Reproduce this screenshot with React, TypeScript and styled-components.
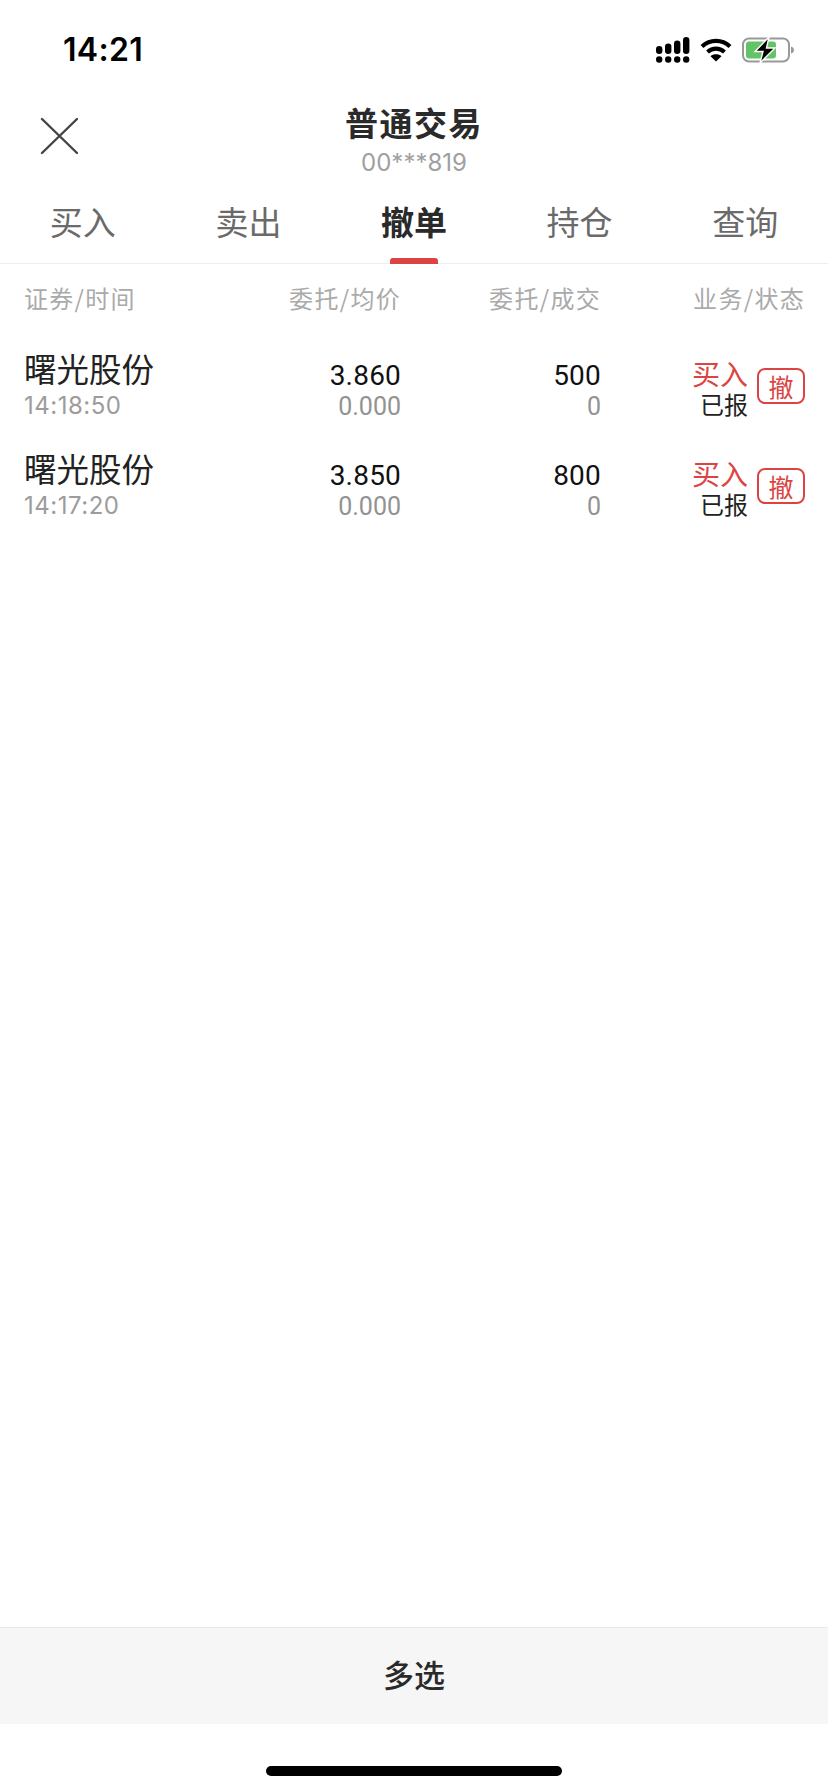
import React from "react";
import styled, { createGlobalStyle } from "styled-components";

const Global = createGlobalStyle`
  html, body { margin: 0; padding: 0; background: #fff; }
  body { font-family: "Inter", "Noto Sans CJK SC", sans-serif; }
`;
const CJK = `"Noto Sans CJK SC", sans-serif`;

const Page = styled.div`
  width: 828px; height: 1792px; display: flex; flex-direction: column; overflow: hidden; background: #fff;
`;
const StatusBar = styled.div`
  height: 100px; flex: none; display: flex; justify-content: space-between; align-items: center; padding: 0 32px 0 63px; box-sizing: border-box;
`;
const Time = styled.span`
  font: 600 32px/36px "Inter", sans-serif; color: #000; letter-spacing: 0.3px;
`;
const StatusIcons = styled.div`
  display: flex; align-items: center; gap: 10px;
`;
const Header = styled.div`
  height: 76px; flex: none; display: flex; flex-direction: column; align-items: center; position: relative;
`;
const Close = styled.svg`
  position: absolute; left: 40px; top: 17px;
`;
const Title = styled.div`
  font: 700 33px/44px ${CJK}; color: #2a2a2a; letter-spacing: 1.5px;
`;
const Account = styled.div`
  font: 400 24px/26px "Inter", sans-serif; color: #a0a0a0; margin-top: 6px;
`;
const Tabs = styled.div`
  height: 88px; flex: none; display: grid; grid-template-columns: repeat(5, 1fr); border-bottom: 1px solid #eee; box-sizing: border-box;
`;
const Tab = styled.div<{ $active?: boolean }>`
  position: relative; display: flex; justify-content: center; padding-top: 23px;
  font: ${p => (p.$active ? 700 : 400)} 33px/44px ${CJK}; color: ${p => (p.$active ? "#2a2a2a" : "#6a6a6a")};
`;
const Indicator = styled.span`
  position: absolute; left: 50%; bottom: -1px; width: 48px; height: 6px; margin-left: -24px; background: #dc4444; border-radius: 3px 3px 0 0;
`;
const Grid = styled.div`
  display: grid; grid-template-columns: 1fr 200px 200px 204px; padding: 0 23px 0 24px;
`;
const HeadRow = styled(Grid)`
  height: 68px; align-items: center; flex: none;
`;
const HeadCell = styled.div<{ $left?: boolean }>`
  font: 400 24px/32px ${CJK}; color: #aaa; text-align: ${p => (p.$left ? "left" : "right")}; letter-spacing: 1.3px;
`;
const Row = styled(Grid)`
  height: 100px; flex: none; align-items: start;
`;
const NameCell = styled.div`
  display: flex; flex-direction: column; padding-top: 16px;
`;
const Name = styled.div`
  font: 400 32.5px/40px ${CJK}; color: #222;
`;
const Clock = styled.div`
  font: 400 24px/28px "Inter", sans-serif; color: #9c9c9c; margin-top: 4px; letter-spacing: 0.5px;
`;
const ValueCell = styled.div`
  display: flex; flex-direction: column; align-items: flex-end; padding-top: 28px;
`;
const Main = styled.div`
  font: 400 28px/32px "Roboto", sans-serif; color: #111; letter-spacing: 0.2px;
`;
const Sub = styled.div`
  font: 400 25px/28px "Roboto", sans-serif; color: #929292; margin-top: 1px;
`;
const StatusCell = styled.div`
  display: flex; justify-content: flex-end; align-items: flex-start; gap: 9px; padding-top: 25px;
`;
const StatusText = styled.div`
  display: flex; flex-direction: column; align-items: flex-end;
`;
const Kind = styled.div`
  font: 400 28px/32px ${CJK}; color: #dc4444;
`;
const State = styled.div`
  font: 400 24px/30px ${CJK}; color: #222;
`;
const Cancel = styled.div`
  width: 48px; height: 36px; box-sizing: border-box; border: 2px solid #dc4444; border-radius: 8px; display: flex; align-items: center; justify-content: center;
  font: 400 25px/32px ${CJK}; color: #dc4444; margin-top: 11px;
`;
const Spacer = styled.div` flex: 1; `;
const Footer = styled.div`
  height: 97px; flex: none; box-sizing: border-box; border-top: 1px solid #e9e9e9; background: #f6f6f6; display: flex; align-items: center; justify-content: center; padding-bottom: 4px;
  font: 500 31px/40px ${CJK}; color: #2a2a2a;
`;
const HomeArea = styled.div`
  height: 68px; flex: none; display: flex; justify-content: center; padding-top: 42px; box-sizing: border-box;
`;
const HomeBar = styled.div`
  width: 296px; height: 10px; border-radius: 5px; background: #000;
`;

const Signal = () => (
  <svg width="34" height="26" viewBox="0 0 34 26">
    {[0, 9, 18, 27].map(x => <circle key={x} cx={x + 3.2} cy="22.5" r="3.2" fill="#000" />)}
    <rect x="0" y="9" width="6.4" height="8" rx="3.2" fill="#000" />
    <rect x="9" y="6.5" width="6.4" height="10.5" rx="3.2" fill="#000" />
    <rect x="18" y="3.5" width="6.4" height="13.5" rx="3.2" fill="#000" />
    <rect x="27" y="0" width="6.4" height="17" rx="3.2" fill="#000" />
  </svg>
);
const Wifi = () => (
  <svg width="32" height="24" viewBox="0 0 32 24" fill="none" stroke="#000" strokeWidth="4.2">
    <path d="M2 8.5C10 1 22 1 30 8.5" />
    <path d="M7.5 14C12.5 9.5 19.5 9.5 24.5 14" />
    <path d="M16 23.5L10.5 18.2C13.5 15.6 18.5 15.6 21.5 18.2Z" fill="#000" stroke="none" />
  </svg>
);
const Battery = () => (
  <svg width="54" height="26" viewBox="0 0 54 26">
    <rect x="1" y="1.5" width="46" height="23" rx="6" fill="none" stroke="#999" strokeWidth="2" />
    <rect x="4" y="4.5" width="30" height="17" rx="3" fill="#63c466" />
    <path d="M49 9.5C51 10 52 11.5 52 13C52 14.5 51 16 49 16.5Z" fill="#999" />
    <path d="M27 0L13 14.5H21L18 26L33 11H24.5Z" fill="#000" stroke="#fff" strokeWidth="1.4" />
  </svg>
);

const orders = [
  { time: "14:18:50", price: "3.860", qty: "500" },
  { time: "14:17:20", price: "3.850", qty: "800" },
];

export default function App() {
  return (
    <Page>
      <Global />
      <StatusBar>
        <Time>14:21</Time>
        <StatusIcons>
          <Signal />
          <Wifi />
          <Battery />
        </StatusIcons>
      </StatusBar>
      <Header>
        <Close width="38" height="38" viewBox="0 0 38 38" stroke="#444" strokeWidth="2.4" strokeLinecap="round">
          <path d="M2 2L37 36M37 2L2 36" />
        </Close>
        <Title>普通交易</Title>
        <Account>00***819</Account>
      </Header>
      <Tabs>
        <Tab>买入</Tab>
        <Tab>卖出</Tab>
        <Tab $active>撤单<Indicator /></Tab>
        <Tab>持仓</Tab>
        <Tab>查询</Tab>
      </Tabs>
      <HeadRow>
        <HeadCell $left>证券/时间</HeadCell>
        <HeadCell>委托/均价</HeadCell>
        <HeadCell>委托/成交</HeadCell>
        <HeadCell>业务/状态</HeadCell>
      </HeadRow>
      {orders.map(o => (
        <Row key={o.time}>
          <NameCell>
            <Name>曙光股份</Name>
            <Clock>{o.time}</Clock>
          </NameCell>
          <ValueCell>
            <Main>{o.price}</Main>
            <Sub>0.000</Sub>
          </ValueCell>
          <ValueCell>
            <Main>{o.qty}</Main>
            <Sub>0</Sub>
          </ValueCell>
          <StatusCell>
            <StatusText>
              <Kind>买入</Kind>
              <State>已报</State>
            </StatusText>
            <Cancel>撤</Cancel>
          </StatusCell>
        </Row>
      ))}
      <Spacer />
      <Footer>多选</Footer>
      <HomeArea><HomeBar /></HomeArea>
    </Page>
  );
}
